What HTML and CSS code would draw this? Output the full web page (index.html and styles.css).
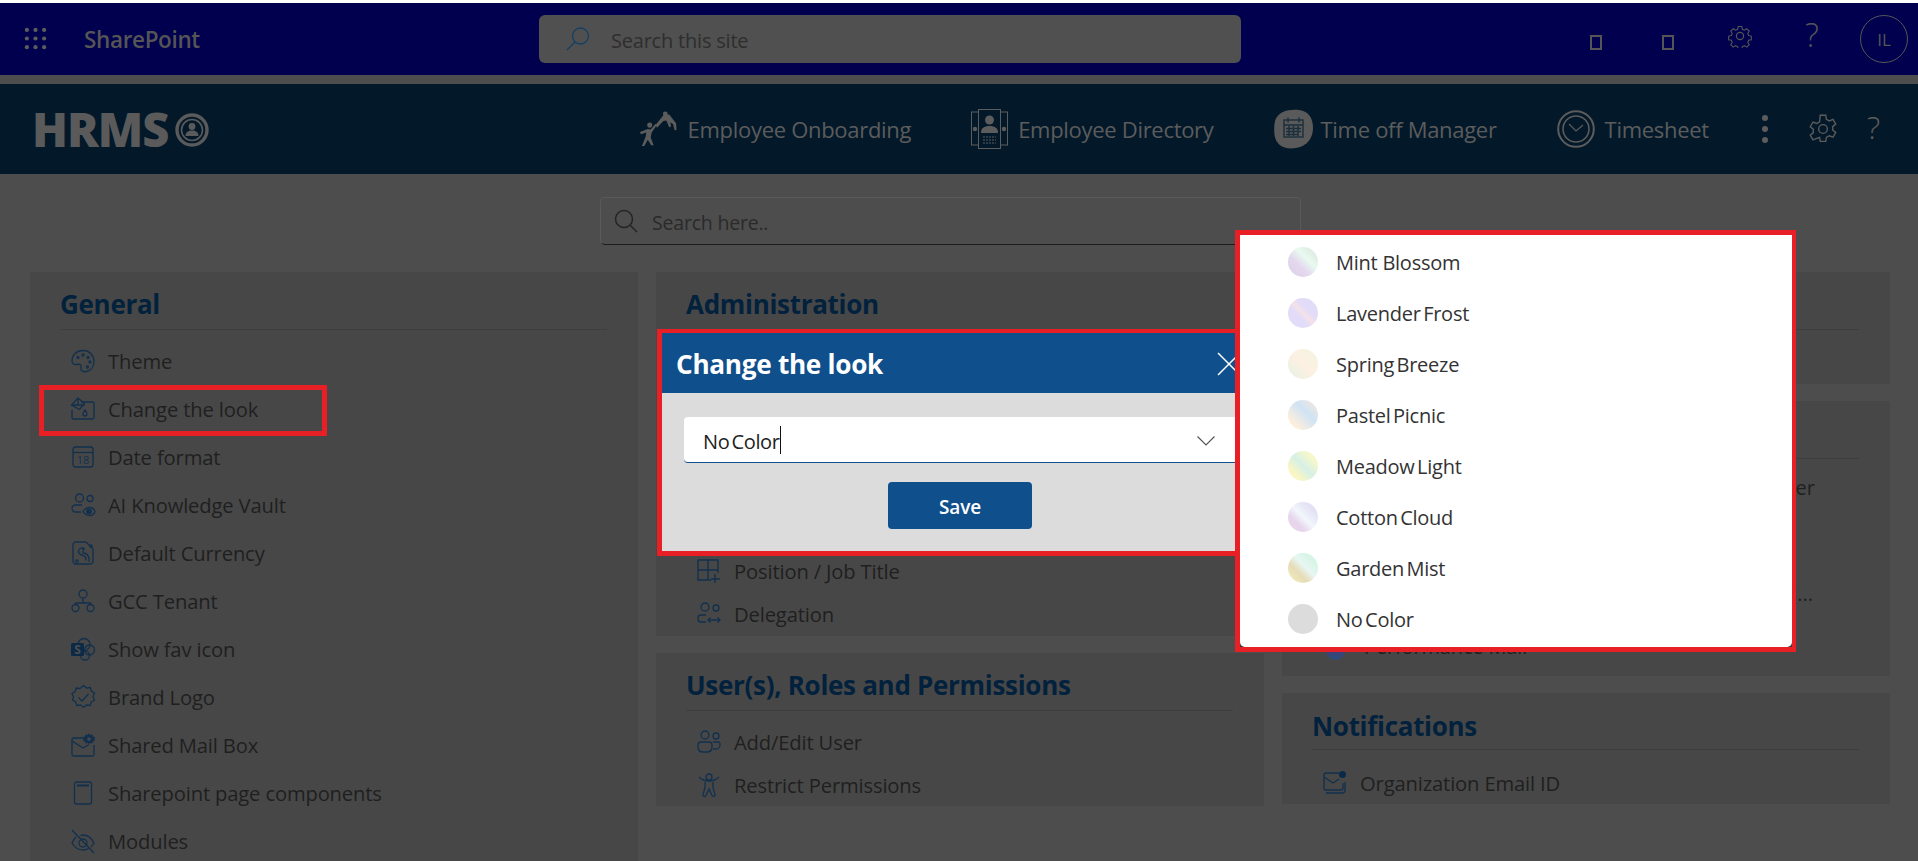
FILE: index.html
```html
<!DOCTYPE html>
<html>
	<head>
		<meta charset="UTF-8">
		<title>HRMS</title>
		<link rel="stylesheet" href="styles.css">
	</head>
	<body>
		<div class="suite">
			<svg class="waffle" viewBox="0 0 24 24"><g fill="#5c5c5c"><circle cx="3" cy="3" r="2.2"/><circle cx="12" cy="3" r="2.2"/><circle cx="21" cy="3" r="2.2"/><circle cx="3" cy="12" r="2.2"/><circle cx="12" cy="12" r="2.2"/><circle cx="21" cy="12" r="2.2"/><circle cx="3" cy="21" r="2.2"/><circle cx="12" cy="21" r="2.2"/><circle cx="21" cy="21" r="2.2"/></g></svg>
			<span class="suite-name">SharePoint</span>
			<div class="suite-search">
				<svg viewBox="0 0 24 24" fill="none" stroke="#123f63" stroke-width="1.3"><circle cx="14.5" cy="9" r="8"/><path d="M9 15 1 23"/></svg>
				<span>Search this site</span>
			</div>
			<div class="suite-tools">
				<i class="tofu"></i>
				<i class="tofu"></i>
				<svg class="suite-gear" viewBox="0 0 24 24" fill="none" stroke="#565656" stroke-width="1.2"><circle cx="12" cy="12" r="3.6"/><path d="M10 1.5h4l.6 3 2.3 1 2.6-1.7 2.8 2.8-1.7 2.6 1 2.3 3 .6v4l-3 .6-1 2.3 1.7 2.6-2.8 2.8-2.6-1.7-2.3 1-.6 3h-4l-.6-3-2.3-1-2.6 1.7-2.8-2.8 1.7-2.6-1-2.3-3-.6v-4l3-.6 1-2.3-1.7-2.6 2.8-2.8 2.6 1.7 2.3-1z" transform="translate(1.2 1.2) scale(.9)"/></svg>
				<span class="suite-help">?</span>
				<span class="avatar">IL</span>
			</div>
		</div>

		<div class="app-bar">
			<div class="logo">
				<span>HRMS</span>
				<svg viewBox="0 0 34 34"><circle cx="17" cy="17" r="15" fill="none" stroke="#5a5a5a" stroke-width="3.4"/><circle cx="17" cy="17" r="10.5" fill="none" stroke="#5a5a5a" stroke-width="1.6"/><circle cx="17" cy="13.5" r="3.4" fill="#5a5a5a"/><path d="M10.5 23c0-4 3-5.5 6.5-5.5s6.5 1.5 6.5 5.5z" fill="#5a5a5a"/></svg>
			</div>
			<nav class="nav">
				<a class="nav-item onboarding">
					<svg viewBox="0 0 40 36" fill="#5c5c5c"><circle cx="11" cy="14" r="2.6"/><path d="M1 21 9 18l3 .5 5-6 1.5 1.2-5.5 8-1 5 3 8h-2.5L9 29l-3.5 6.5H3l4-10 .5-4-5.5 2zM17 14l8-10 6-1 7 9 .5 7-2 .2-1.5-6-3-2 1 4-2 1-3-7-3 .5-6.5 7z"/><circle cx="27" cy="2.5" r="2.5"/></svg>
					<span>Employee Onboarding</span>
				</a>
				<a class="nav-item directory">
					<svg viewBox="0 0 37 40" fill="none" stroke="#5c5c5c" stroke-width="1"><rect x=".5" y="3" width="36" height="33"/><rect x="7.5" y=".5" width="22" height="39" fill="#03192a"/><circle cx="18.5" cy="11" r="4.5" fill="#5c5c5c" stroke="none"/><path d="M10 24c0-5 3-7 8.5-7s8.5 2 8.5 7z" fill="#5c5c5c" stroke="none"/><path d="M12 28h13M12 31h13M12 34h13" stroke-dasharray="2 1"/><circle cx="4" cy="20" r="2.2" fill="#5c5c5c" stroke="none"/><circle cx="33" cy="20" r="2.2" fill="#5c5c5c" stroke="none"/></svg>
					<span>Employee Directory</span>
				</a>
				<a class="nav-item timeoff">
					<svg viewBox="0 0 42 40"><path d="M2 12C5 2 16 0 26 1s14 9 14 18-5 18-17 20S3 36 1.5 26C1 21 1 16 2 12z" fill="#5a5a5a"/><g fill="none" stroke="#1a2e3c" stroke-width="1.4"><rect x="11" y="11" width="19" height="17"/><path d="M11 16h19M15 8.5v5M26 8.5v5M13 19.5h15M13 22.5h15M13 25.5h12M16 17v10M20.5 17v10M25 17v10"/></g></svg>
					<span>Time off Manager</span>
				</a>
				<a class="nav-item timesheet">
					<svg viewBox="0 0 38 38" fill="none" stroke="#5c5c5c"><circle cx="19" cy="19" r="17.8" stroke-width="2"/><circle cx="19" cy="19" r="13" stroke-width="1.6"/><path d="m12 14 7 7 7-6" stroke-width="1.2"/></svg>
					<span>Timesheet</span>
				</a>
				<div class="kebab"><i></i><i></i><i></i></div>
				<svg class="nav-gear" viewBox="0 0 24 24" fill="none" stroke="#5c5c5c" stroke-width="1.1"><circle cx="12" cy="12" r="3.5"/><path d="M9.8 1h4.4l.5 3.2 2.3 1.3 3-1.2 2.2 3.800-2.500 2c.2.900.2 1.800 0 2.700l2.500 2-2.200 3.800-3-1.200-2.300 1.300-.5 3.200H9.800l-.5-3.200L7 19.500l-3 1.200L1.800 16.900l2.500-2c-.2-.9-.2-1.800 0-2.700l-2.500-2L4 6.400l3 1.200 2.300-1.300z"/></svg>
				<span class="nav-help">?</span>
			</nav>
		</div>

		<div class="search-row">
			<div class="page-search">
				<svg viewBox="0 0 24 24" fill="none" stroke="#242424" stroke-width="1.5"><circle cx="10" cy="10" r="8.5"/><path d="m16 16 7 7"/></svg>
				<span>Search here..</span>
			</div>
		</div>

		<div class="columns">
			<section class="card card-general">
				<h2>General</h2>
				<ul class="menu">
					<li><svg viewBox="0 0 24 24"><path d="M12 1.5C5.5 1.5 1 6 1 11.5c0 3 2 4.5 4.5 4 2.5-.5 4-.5 4.5 1 .5 1.500-1 3 .5 5 1 1 3 1.500 5 1 4.500-1 7.500-5 7.500-10 0-6-4.500-11-10.500-11z"/><circle cx="7" cy="8.5" r="1"/><circle cx="12" cy="6" r="1"/><circle cx="17" cy="8.5" r="1"/><circle cx="19" cy="13" r="1"/><circle cx="16.5" cy="18" r="1"/></svg><span>Theme</span></li>
					<li><svg viewBox="0 0 24 24"><path d="M10 5h11.5A1.5 1.5 0 0 1 23 6.5v14a1.5 1.5 0 0 1-1.5 1.5h-19A1.5 1.5 0 0 1 1 20.5V13"/><path d="m7 1 6.5 5.5-5 6L.5 8z"/><path d="M1 8h12.5M7 1v7"/><path d="M14 13c-1.5 2-2 3-2 4a2 2 0 0 0 4 0c0-1-.5-2-2-4z"/></svg><span>Change the look</span></li>
					<li><svg viewBox="0 0 24 24"><rect x="2" y="2" width="20" height="20" rx="2.5"/><path d="M2 7.5h20"/><text x="12" y="18.5" class="glyph">18</text></svg><span>Date format</span></li>
					<li><svg viewBox="0 0 24 24"><circle cx="8.5" cy="5" r="4"/><circle cx="19" cy="5.5" r="3"/><path d="M11 12H4.5A3.5 3.5 0 0 0 1 15.5 3.5 3.5 0 0 0 4.5 19H10"/><path d="M12 18.5c2-3 4-4 6.5-4s4.500 1 5.500 4c-1 3-3 4-5.500 4s-4.500-1-6.500-4z"/><circle cx="18" cy="18.5" r="2.2" fill="#12304e"/></svg><span>AI Knowledge Vault</span></li>
					<li><svg viewBox="0 0 24 24"><path d="M4 1h11l7 7v13l-2 2H4l-2-2V3z"/><path d="M14 8.5c-2-2.500-6-1.500-6.500 1.500-.5 3 3 4 4.500 4.500 2 .5 3 2.500 3 5"/><path d="M12 6v6c3 0 5 2 6 5v4"/><circle cx="20" cy="5" r="1.2"/><circle cx="6" cy="20" r="1.2"/></svg><span>Default Currency</span></li>
					<li><svg viewBox="0 0 24 24"><circle cx="12" cy="5" r="4"/><circle cx="4.5" cy="19" r="3.5"/><circle cx="19.5" cy="19" r="3.5"/><path d="M12 9v5M4.5 15.5V14h15v1.500"/></svg><span>GCC Tenant</span></li>
					<li><svg viewBox="0 0 24 24"><circle cx="13" cy="7.5" r="6"/><circle cx="18.5" cy="13" r="5"/><circle cx="14" cy="18.5" r="4.5"/><rect x="0" y="6" width="13" height="13" rx="1.5" fill="#0b2a47" stroke="none"/><text x="6.5" y="16.5" class="glyph glyph-s">S</text></svg><span>Show fav icon</span></li>
					<li><svg viewBox="0 0 24 24"><path d="m12 1 3 2.5 3.8-.5 1 3.5 3.2 2-1.5 3.5 1.5 3.5-3.2 2-1 3.5-3.8-.5-3 2.5-3-2.5-3.8.5-1-3.5-3.2-2L2 12.500 .5 9 3.700 7l1-3.500L8.500 4z" transform="translate(.5 -.5)"/><path d="m7.5 12.5 3.5 3.5 6.5-7"/></svg><span>Brand Logo</span></li>
					<li><svg viewBox="0 0 24 24"><path d="M14 5H2.5A1.5 1.5 0 0 0 1 6.5v15A1.5 1.5 0 0 0 2.5 23h19a1.500 1.500 0 0 0 1.500-1.500V12"/><path d="m1 8 11 7 6-3.5"/><path d="M18 .5l1.5 1.5 2-.5.5 2 2 .5-.5 2 .5 1.5-2 1-.5 2-2-.5L18 11l-1.500-1-2 .5-.5-2-2-.5.5-2L12 4l2-.5.5-2 2 .5z" fill="#12304e" stroke="none"/><circle cx="18" cy="6" r="1.8" fill="#474747" stroke="none"/></svg><span>Shared Mail Box</span></li>
					<li><svg viewBox="0 0 24 24"><rect x="3.5" y="1" width="17" height="22" rx="2"/><path d="M6 4.5h12" stroke-width="2"/></svg><span>Sharepoint page components</span></li>
					<li><svg viewBox="0 0 24 24"><path d="M1 1l22 23"/><path d="M5 8C3.5 9.5 2 11.5 1 14c3 5 6.5 7 11 7 2 0 4-.5 5.5-1.5M9.5 6.5c1-.2 1.700-.5 2.500-.5 5 0 8.500 3 11 8-1 2-2 3-3 4"/><circle cx="12" cy="14" r="4"/></svg><span>Modules</span></li>
				</ul>
			</section>

			<div class="stack">
				<section class="card card-admin">
					<h2 class="no-line">Administration</h2>
					<ul class="menu menu-tight">
						<li><svg viewBox="0 0 24 24"><path d="M1 1h20v13M1 1v20h13M11 1v20M1 11h20"/><path d="M18 15v9M14 20h9"/></svg><span>Position / Job Title</span></li>
						<li><svg viewBox="0 0 24 24"><circle cx="8" cy="5" r="4"/><circle cx="19" cy="6" r="3"/><path d="M9 13H4a3 3 0 0 0-3 3v1a3 3 0 0 0 3 3h5"/><path d="M11 18h12M13.5 15.5 11 18l2.5 2.5M20.5 15.5 23 18l-2.5 2.5"/></svg><span>Delegation</span></li>
					</ul>
				</section>
				<section class="card">
					<h2>User(s), Roles and Permissions</h2>
					<ul class="menu menu-tight">
						<li><svg viewBox="0 0 24 24"><circle cx="8" cy="5" r="4"/><circle cx="19" cy="6" r="3"/><path d="M4 12h8a3 3 0 0 1 3 3v3a5 5 0 0 1-5 4H6a5 5 0 0 1-5-4v-3a3 3 0 0 1 3-3zM16 12h5a2 2 0 0 1 2 2v1a4 4 0 0 1-4 4h-3"/></svg><span>Add/Edit User</span></li>
						<li><svg viewBox="0 0 24 24"><circle cx="12" cy="4" r="3"/><path d="M2 4c3 3 6 4 10 4s7-1 10-4M8 9c.5 4 0 7-2 12a1.500 1.500 0 0 0 3 1.500L12 16l3 6.500a1.500 1.500 0 0 0 3-1.500c-2-5-2.500-8-2-12"/></svg><span>Restrict Permissions</span></li>
					</ul>
				</section>
			</div>

			<div class="stack">
				<section class="card card-short">
					<h2>&nbsp;</h2>
				</section>
				<section class="card card-peek">
					<h2>&nbsp;</h2>
					<ul class="peek-list">
						<li>er</li>
						<li class="peek-second">l...</li>
						<li class="peek-mail"><i class="mail-dot"></i><span>Performance Mail</span></li>
					</ul>
				</section>
				<section class="card card-notify">
					<h2>Notifications</h2>
					<ul class="menu menu-tight">
						<li><svg viewBox="0 0 24 24"><path d="M16 2H3a2 2 0 0 0-2 2v13a2 2 0 0 0 2 2h15a2 2 0 0 0 2-2v-5"/><path d="m1 6 9 6 6-4"/><path d="M3 22h16a3 3 0 0 0 3-3v-8"/><circle cx="19.5" cy="3.5" r="3.5" fill="#0b2a47" stroke="none"/></svg><span>Organization Email ID</span></li>
					</ul>
				</section>
			</div>
		</div>

		<div class="mark mark-look"></div>

		<div class="dialog">
			<div class="dialog-head">
				<span>Change the look</span>
				<svg viewBox="0 0 20 24" fill="none" stroke="#fff" stroke-width="1.5"><path d="M1 1l22 22M23 1 1 23"/></svg>
			</div>
			<div class="dialog-body">
				<div class="select">
					<span>No Color</span><i class="caret"></i>
					<svg viewBox="0 0 18 10" fill="none" stroke="#555" stroke-width="1.2"><path d="m.5.5 8.5 8.5L17.5.5"/></svg>
				</div>
				<button class="save">Save</button>
			</div>
		</div>

		<div class="palette-frame">
			<ul class="palette">
				<li class="spaced"><i class="dot mint"></i><span>Mint Blossom</span></li>
				<li><i class="dot lavender"></i><span>Lavender Frost</span></li>
				<li><i class="dot spring"></i><span>Spring Breeze</span></li>
				<li><i class="dot picnic"></i><span>Pastel Picnic</span></li>
				<li><i class="dot meadow"></i><span>Meadow Light</span></li>
				<li><i class="dot cotton"></i><span>Cotton Cloud</span></li>
				<li><i class="dot garden"></i><span>Garden Mist</span></li>
				<li><i class="dot none"></i><span>No Color</span></li>
			</ul>
		</div>
	</body>
</html>
```

FILE: styles.css
```css
*{
	box-sizing: border-box;
}
html,body{
	height: 861px;
	overflow: hidden;
}
body{
	margin: 0;
	padding-top: 3px;
	background: #4d4d4d;
	font-family: "Open Sans", "Noto Sans", sans-serif;
	color: #1f1f1f;
	position: relative;
}
body::before{
	content: "";
	position: absolute;
	left: 0;
	top: 0;
	width: 100%;
	height: 3px;
	background: #fff;
}
ul{
	list-style: none;
	margin: 0;
	padding: 0;
}

/* suite bar */
.suite{
	height: 72px;
	background: #00004f;
	display: flex;
	align-items: center;
	padding-left: 24px;
}
.waffle{
	width: 23px;
	height: 23px;
	margin-top: -1px;
}
.suite-name{
	margin-left: 37px;
	font-size: 22.5px;
	font-weight: 600;
	color: #555;
	letter-spacing: -0.35px;
	padding-top: 1px;
}
.suite-search{
	margin-left: 339px;
	width: 702px;
	height: 48px;
	background: #505050;
	border-radius: 6px;
	display: flex;
	align-items: center;
	padding-left: 27px;
	gap: 21px;
}
.suite-search svg{
	width: 24px;
	height: 24px;
}
.suite-search span{
	font-size: 20px;
	color: #2e2e2e;
	letter-spacing: -0.2px;
	padding-top: 2px;
}
.suite-tools{
	margin-left: auto;
	display: flex;
	align-items: center;
	width: 328px;
	padding-right: 10px;
	height: 48px;
}
.tofu{
	width: 12px;
	height: 15px;
	border: 2px solid #555;
	margin-right: 60px;
	margin-top: 6px;
}
.suite-gear{
	width: 24px;
	height: 24px;
	margin-left: -6px;
	margin-top: -7px;
}
.suite-help{
	font-size: 33px;
	font-weight: 300;
	color: #555;
	margin-left: 53px;
	margin-top: -9px;
}
.avatar{
	margin-left: auto;
	width: 48px;
	height: 48px;
	border: 1px solid #565656;
	border-radius: 50%;
	display: flex;
	align-items: center;
	justify-content: center;
	font-size: 17px;
	color: #565656;
}

/* hrms bar */
.app-bar{
	margin-top: 9px;
	height: 90px;
	background: #03192a;
	display: flex;
	align-items: center;
	padding-left: 32px;
}
.logo{
	display: flex;
	align-items: center;
	gap: 7px;
	color: #5a5a5a;
	font-size: 47px;
	font-weight: 800;
	letter-spacing: -1px;
}
.logo svg{
	width: 34px;
	height: 34px;
	margin-top: 2px;
}
.nav{
	margin-left: auto;
	display: flex;
	align-items: center;
	color: #5c5c5c;
	font-size: 22px;
	letter-spacing: -0.3px;
	padding-right: 38px;
}
.nav-item{
	display: flex;
	align-items: center;
	gap: 10px;
}
.nav-item svg{
	display: block;
	flex: none;
}
.onboarding{
	margin-right: 60px;
}
.onboarding svg{
	width: 39px;
	height: 36px;
}
.directory{
	margin-right: 59px;
}
.directory svg{
	width: 37px;
	height: 40px;
}
.timeoff{
	margin-right: 60px;
	gap: 6px;
}
.timeoff svg{
	width: 42px;
	height: 40px;
}
.timesheet{
	margin-right: 53px;
}
.timesheet svg{
	width: 38px;
	height: 38px;
}
.kebab{
	display: flex;
	flex-direction: column;
	gap: 5px;
	margin-right: 40px;
}
.kebab i{
	width: 6px;
	height: 6px;
	border-radius: 50%;
	background: #5c5c5c;
}
.nav-gear{
	width: 30px;
	height: 32px;
}
.nav-help{
	font-size: 32px;
	font-weight: 300;
	margin-left: 29px;
	margin-top: -6px;
}

/* page search */
.search-row{
	height: 98px;
	padding-top: 23px;
	padding-left: 600px;
}
.page-search{
	width: 701px;
	height: 48px;
	border: 1px solid #5a5a5a;
	border-bottom-color: #1c1c1c;
	border-radius: 5px;
	display: flex;
	align-items: center;
	padding-left: 13px;
	gap: 14px;
}
.page-search svg{
	width: 24px;
	height: 24px;
}
.page-search span{
	font-size: 19.5px;
	color: #2a2a2a;
	letter-spacing: -0.2px;
	padding-top: 2px;
}

/* cards */
.columns{
	display: grid;
	grid-template-columns: 608px 608px 608px;
	gap: 18px;
	padding-left: 30px;
	align-items: start;
	height: 589px;
	overflow: hidden;
}
.stack{
	display: flex;
	flex-direction: column;
	gap: 17px;
}
.card{
	background: #474747;
	padding: 0 31px 0 30px;
}
.card-general{
	height: 589px;
	overflow: hidden;
}
.card h2{
	margin: 0;
	height: 58px;
	line-height: 64px;
	font-size: 26px;
	font-weight: 700;
	color: #02213d;
	letter-spacing: -0.3px;
	border-bottom: 1px solid #3e3e3e;
	white-space: nowrap;
}
.card h2.no-line{
	border-bottom: 0;
}
.menu{
	margin-top: 7px;
	padding-left: 11px;
}
.menu li{
	height: 48px;
	display: flex;
	align-items: center;
	gap: 13px;
	font-size: 20.2px;
	color: #1f1f1f;
	letter-spacing: -0.15px;
	white-space: nowrap;
}
.menu li svg{
	width: 24px;
	height: 24px;
	flex: none;
	fill: none;
	stroke: #12304e;
	stroke-width: 1.3;
	overflow: visible;
}
.glyph{
	font-size: 11px;
	text-anchor: middle;
	fill: #12304e;
	stroke: none;
}
.glyph-s{
	font-weight: 700;
	font-size: 12px;
	fill: #4d4d4d;
}
.menu-tight{
	margin-top: 9px;
}
.menu-tight li{
	height: 43px;
}
/* the rows above Position / Job Title are covered by the dialog */
.card-admin .menu-tight{
	margin-top: 0;
	padding-top: 219px;
}
.card-admin{
	height: 364px;
}
.card-short{
	height: 112px;
}
.card-peek{
	height: 275px;
}
.card-peek .peek-list{
	padding: 7px 44px 0 0;
	font-size: 20px;
}
.peek-list li{
	height: 43px;
	line-height: 43px;
	text-align: right;
}
.peek-list .peek-second{
	margin-top: 63px;
	padding-right: 2px;
}
.peek-list .peek-mail{
	margin-top: 10px;
	text-align: left;
	padding-left: 14px;
	display: flex;
	align-items: center;
	gap: 19px;
	letter-spacing: -0.15px;
}
.mail-dot{
	width: 19px;
	height: 19px;
	margin-top: 8px;
	border-radius: 50%;
	background: linear-gradient(180deg, #5a2f6e, #2a4f7d);
}
.card-notify{
	height: 111px;
}
.card-notify h2{
	height: 57px;
	line-height: 66px;
}
.card-notify .menu-tight{
	margin-top: 11px;
}

/* red annotation on Change the look */
.mark{
	position: absolute;
	border: 5px solid #e81f25;
}
.mark-look{
	left: 39px;
	top: 385px;
	width: 288px;
	height: 51px;
}

/* dialog */
.dialog{
	position: absolute;
	left: 657px;
	top: 329px;
	width: 600px;
	height: 227px;
	border: 5px solid #e81f25;
	border-top-width: 4px;
	background: #dcdcdc;
}
.dialog-head{
	height: 60px;
	background: #0f4f8c;
	color: #fff;
	display: flex;
	align-items: center;
	padding-left: 14px;
	font-size: 26.2px;
	font-weight: 700;
	letter-spacing: -0.3px;
}
.dialog-head span{
	padding-top: 2px;
}
.dialog-head svg{
	position: absolute;
	left: 555px;
	top: 19px;
	width: 20px;
	height: 24px;
	overflow: hidden;
}
.dialog-body{
	padding: 24px 0 0 22px;
	position: relative;
}
.select{
	width: 560px;
	height: 46px;
	background: #fff;
	border-bottom: 1px solid #0f4f8c;
	border-radius: 4px;
	display: flex;
	align-items: center;
	padding-left: 19px;
	font-size: 20px;
	word-spacing: -2.5px;
	letter-spacing: -0.4px;
	color: #222;
	position: relative;
}
.select span{
	padding-top: 3px;
}
.select svg{
	position: absolute;
	left: 513px;
	top: 19px;
	width: 18px;
	height: 10px;
}
.caret{
	width: 1px;
	height: 28px;
	background: #111;
	margin-left: 1px;
}
.save{
	display: block;
	margin: 19px 0 0 204px;
	width: 144px;
	height: 47px;
	padding-top: 3px;
	background: #0f4f8c;
	border: 0;
	border-radius: 4px;
	color: #fff;
	font-family: inherit;
	font-size: 19px;
	font-weight: 600;
	letter-spacing: -0.2px;
}

/* colour list */
.palette-frame{
	position: absolute;
	left: 1235px;
	top: 230px;
	width: 561px;
	height: 422px;
	background: #3a3a3a;
	border: 5px solid #e81f25;
	border-right-width: 4px;
}
.palette{
	height: 100%;
	padding-top: 1px;
	background: #fff;
	border-radius: 0 0 5px 5px;
}
.palette li{
	height: 51px;
	display: flex;
	align-items: center;
	padding-left: 48px;
	gap: 18px;
	font-size: 20px;
	color: #333;
	word-spacing: -2.5px;
	letter-spacing: -0.25px;
}
.palette li span{
	padding-top: 2px;
}
.palette li.spaced{
	word-spacing: 0;
}
.dot{
	width: 30px;
	height: 30px;
	border-radius: 50%;
	flex: none;
}
.mint{
	background: linear-gradient(45deg, #dccfe8 0, #e4d8ee 38%, #e8faf0 62%, #d8e2da 100%);
}
.lavender{
	background: linear-gradient(45deg, #e2dcf8 0, #e2dcf8 38%, #f4e2e6 50%, #e2dcf8 62%, #e0dcf6 100%);
}
.spring{
	background: linear-gradient(45deg, #e4f2e4 0, #fdf0e2 50%, #f2f4e0 100%);
}
.picnic{
	background: linear-gradient(45deg, #fbeedd 0, #fbeedd 22%, #cfe3f5 60%, #fbe8d8 100%);
}
.meadow{
	background: linear-gradient(45deg, #f8f6c4 0, #f8f6c4 25%, #d6f0e6 50%, #f6f8ca 80%);
}
.cotton{
	background: linear-gradient(45deg, #ead2ea 0, #e6d6ec 30%, #f2f6fc 50%, #e4e4f6 75%, #dcd8f0 100%);
}
.garden{
	background: linear-gradient(45deg, #f4f0b8 0, #e6dcb8 35%, #e8f6f2 55%, #c8f4dc 100%);
}
.none{
	background: #dcdcdc;
}
```
